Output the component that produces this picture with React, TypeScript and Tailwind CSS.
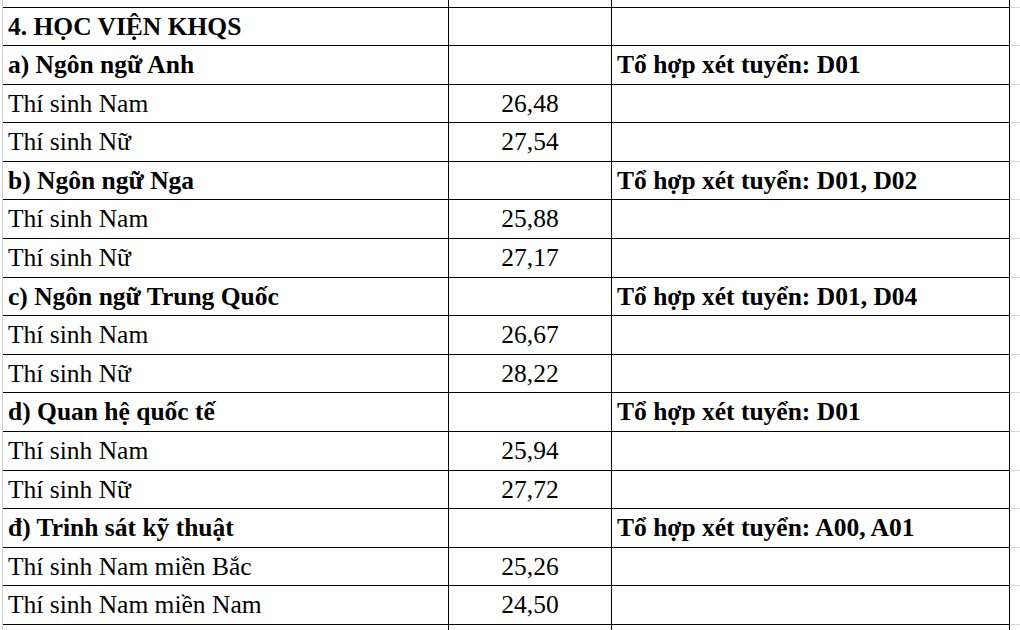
import React from "react";

type Row = { a: string; b?: string; c?: string; bold?: boolean };

const rows: Row[] = [
  { a: "4. HỌC VIỆN KHQS", bold: true },
  { a: "a) Ngôn ngữ Anh", c: "Tổ hợp xét tuyển: D01", bold: true },
  { a: "Thí sinh Nam", b: "26,48" },
  { a: "Thí sinh Nữ", b: "27,54" },
  { a: "b) Ngôn ngữ Nga", c: "Tổ hợp xét tuyển: D01, D02", bold: true },
  { a: "Thí sinh Nam", b: "25,88" },
  { a: "Thí sinh Nữ", b: "27,17" },
  { a: "c) Ngôn ngữ Trung Quốc", c: "Tổ hợp xét tuyển: D01, D04", bold: true },
  { a: "Thí sinh Nam", b: "26,67" },
  { a: "Thí sinh Nữ", b: "28,22" },
  { a: "d) Quan hệ quốc tế", c: "Tổ hợp xét tuyển: D01", bold: true },
  { a: "Thí sinh Nam", b: "25,94" },
  { a: "Thí sinh Nữ", b: "27,72" },
  { a: "đ) Trinh sát kỹ thuật", c: "Tổ hợp xét tuyển: A00, A01", bold: true },
  { a: "Thí sinh Nam miền Bắc", b: "25,26" },
  { a: "Thí sinh Nam miền Nam", b: "24,50" },
  { a: "e) Ngôn ngữ Hàn Quốc", c: "Tổ hợp xét tuyển: D01", bold: true },
];

function TableRow({ row }: { row: Row }) {
  const weight = row.bold ? "font-bold" : "font-normal";
  return (
    <div className="flex h-[38.6px] shrink-0">
      <div className="w-[3px] shrink-0 border-r border-[#cfcfcf]" />
      <div
        className={`w-[446px] shrink-0 border-t border-r border-black pl-[5px] leading-[37.6px] whitespace-nowrap overflow-hidden ${weight}`}
      >
        {row.a}
      </div>
      <div className="w-[163px] shrink-0 border-t border-r border-black text-center leading-[37.6px] whitespace-nowrap">
        {row.b ?? ""}
      </div>
      <div
        className={`w-[398px] shrink-0 border-t border-r border-black pl-[5px] leading-[37.6px] whitespace-nowrap overflow-hidden ${weight}`}
      >
        {row.c ?? ""}
      </div>
      <div className="flex-1 border-t border-[#d6d6d6]" />
    </div>
  );
}

export default function App() {
  return (
    <div className="w-[1020px] h-[630px] overflow-hidden bg-white text-[25.5px] text-black flex flex-col font-['Liberation_Serif','Times_New_Roman',serif]">
      <div className="flex h-[6.5px] shrink-0">
        <div className="w-[3px] shrink-0 border-r border-[#cfcfcf]" />
        <div className="w-[446px] shrink-0 border-r border-black" />
        <div className="w-[163px] shrink-0 border-r border-black" />
        <div className="w-[398px] shrink-0 border-r border-black" />
        <div className="flex-1" />
      </div>
      {rows.map((r, i) => (
        <TableRow key={i} row={r} />
      ))}
    </div>
  );
}
